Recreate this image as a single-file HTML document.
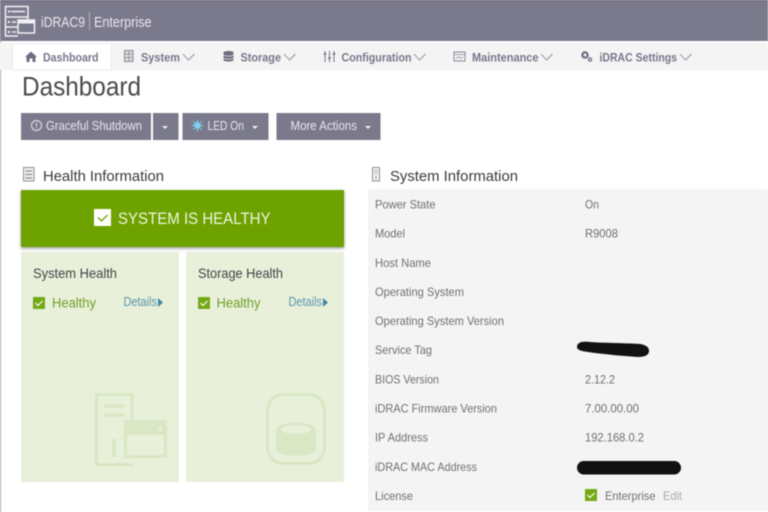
<!DOCTYPE html>
<html><head><meta charset="utf-8"><title>iDRAC9 Dashboard</title>
<style>
html,body{margin:0;padding:0;background:#fff;width:768px;height:512px;overflow:hidden}
svg{display:block;filter:blur(0.45px)}
text{font-family:"Liberation Sans",sans-serif}
.n{font-size:12px;font-weight:bold;fill:#77768a}
.b{font-size:12.5px;fill:#e6e6ec}
.l{font-size:12px;fill:#707070}
.h{font-size:15px;fill:#3a3a3a}
.c{font-size:14px;fill:#444}
.g{font-size:13.5px;fill:#6f9f28}
.d{font-size:12.5px;fill:#5a93ad}
.ch{fill:none;stroke:#8a8998;stroke-width:.9}
</style></head><body>
<svg width="768" height="512" viewBox="0 0 768 512" xmlns="http://www.w3.org/2000/svg">
<defs><filter id="s" x="-5%" y="-20%" width="110%" height="140%"><feDropShadow dx="0" dy="1.5" stdDeviation="1.5" flood-color="#000" flood-opacity=".4"/></filter></defs>
<rect width="768" height="512" fill="#fff"/>
<rect y="41" width="1" height="471" fill="#aaa"/>
<!-- header -->
<rect width="768" height="41" fill="#7b7a8c"/>
<rect width="768" height="1" fill="#5f5e70"/>
<g fill="none" stroke="#f1f1f4" stroke-width="1.500">
<path d="M28 19V6.500H5.500V36H18"/><path d="M5.500 17H28M5.500 27H18"/>
<rect x="18" y="20" width="16.500" height="13"/>
<path d="M11 11.500H25M12 22H16M12 32H16"/></g>
<rect x="18" y="19.500" width="17" height="4" fill="#f1f1f4"/>
<g fill="#f1f1f4"><rect x="8" y="10.500" width="2" height="2"/><rect x="8" y="21" width="2" height="2"/><rect x="8" y="31" width="2" height="2"/></g>
<text x="41" y="27" font-size="14.500" fill="#e8e8ee" textLength="44" lengthAdjust="spacingAndGlyphs">iDRAC9</text>
<rect x="89" y="12" width="1" height="18" fill="#b5b5c0"/>
<text x="94" y="27" font-size="14.500" fill="#e8e8ee" textLength="57.500" lengthAdjust="spacingAndGlyphs">Enterprise</text>
<!-- nav -->
<rect y="43" width="768" height="27" fill="#f4f4f4"/>
<rect x="12.500" y="43.500" width="99" height="26.500" fill="#fff" stroke="#e9e9e9"/>
<path d="M25 57L31 51.500L37 57H35.500V62H32.500V58.500H29.500V62H26.500V57Z" fill="#6f6e80"/>
<text class="n" x="43" y="61.500" textLength="55.500" lengthAdjust="spacingAndGlyphs">Dashboard</text>
<rect x="124.500" y="50.500" width="8.500" height="11" fill="#ddd" stroke="#8a8998"/><path d="M125 54H133M125 57.500H133M129 51V61" stroke="#8a8998" stroke-width=".8"/>
<text class="n" x="141" y="61.500" textLength="39" lengthAdjust="spacingAndGlyphs">System</text>
<path class="ch" d="M183 54L188.500 60L194.500 54"/>
<path d="M223.500 52.500C223.500 50.500 233.500 50.500 233.500 52.500V60C233.500 62 223.500 62 223.500 60Z" fill="#6f6e80"/><path d="M223.500 55C225 56.500 232 56.500 233.500 55M223.500 58C225 59.500 232 59.500 233.500 58" stroke="#f4f4f4" fill="none" stroke-width=".8"/>
<text class="n" x="240.500" y="61.500" textLength="40.500" lengthAdjust="spacingAndGlyphs">Storage</text>
<path class="ch" d="M284 54L289.500 60L295.500 54"/>
<path d="M325 51V62M329.500 51V62M334 51V62" stroke="#777686" stroke-width="1"/><path d="M323.500 54H326.500M328 58H331M332.500 54H335.500" stroke="#6f6e80" stroke-width="1.300"/>
<text class="n" x="341.500" y="61.500" textLength="70" lengthAdjust="spacingAndGlyphs">Configuration</text>
<path class="ch" d="M414 54L419.500 60L425.500 54"/>
<rect x="454" y="52" width="11" height="9" fill="none" stroke="#8a8998"/><path d="M454 54.500H465M456 59L458.500 56.500L460.500 58.500L463 57" fill="none" stroke="#8a8998" stroke-width=".7"/>
<text class="n" x="472" y="61.500" textLength="66.500" lengthAdjust="spacingAndGlyphs">Maintenance</text>
<path class="ch" d="M541 54L546.500 60L552.500 54"/>
<circle cx="585" cy="55" r="2.600" fill="none" stroke="#6f6e80" stroke-width="2.200"/><circle cx="590" cy="59.500" r="1.600" fill="none" stroke="#6f6e80" stroke-width="1.300"/>
<text class="n" x="599.500" y="61.500" textLength="77.500" lengthAdjust="spacingAndGlyphs">iDRAC Settings</text>
<path class="ch" d="M680 54L685.500 60L691.500 54"/>
<!-- title -->
<text x="22" y="95.500" font-size="27" fill="#4a4a4a" textLength="119" lengthAdjust="spacingAndGlyphs">Dashboard</text>
<!-- buttons -->
<g fill="#7b7a8c"><rect x="21" y="113" width="130" height="27"/><rect x="153" y="113" width="25.500" height="27"/><rect x="182.500" y="113" width="86" height="27"/><rect x="276.500" y="113" width="104" height="27"/></g>
<circle cx="36.500" cy="125.500" r="5" fill="none" stroke="#e6e6ec"/><path d="M36.500 122.500V126M36.500 127V128.500" stroke="#e6e6ec"/>
<text class="b" x="46" y="130" textLength="96" lengthAdjust="spacingAndGlyphs">Graceful Shutdown</text>
<path d="M162 126H168L165 129Z M252 126H258L255 129Z M365 126H371L368 129Z" fill="#eee"/>
<circle cx="197.500" cy="125.500" r="3.200" fill="#7fd0f2"/><path d="M197.500 119.500V131.500M191.500 125.500H203.500M193.300 121.300L201.700 129.700M193.300 129.700L201.700 121.300" stroke="#7fd0f2" stroke-width="1"/>
<text class="b" x="207.500" y="130" textLength="36.500" lengthAdjust="spacingAndGlyphs">LED On</text>
<text class="b" x="290.500" y="130" textLength="66.500" lengthAdjust="spacingAndGlyphs">More Actions</text>
<!-- health -->
<rect x="23.500" y="167.500" width="10.500" height="13.500" fill="#eee" stroke="#8f8f8f"/><path d="M25.500 171H32M25.500 174.500H32M25.500 178H32" stroke="#8f8f8f" stroke-width="1.200"/>
<text class="h" x="43" y="181" textLength="121" lengthAdjust="spacingAndGlyphs">Health Information</text>
<rect x="21" y="190" width="323" height="57" fill="#6ea204" filter="url(#s)"/>
<rect x="94" y="209" width="17" height="17" fill="#fff"/>
<path d="M98 217.500L101.500 221L107.500 215" fill="none" stroke="#6ea204" stroke-width="1.300"/>
<text x="118" y="224" font-size="17" fill="#eef5e0" textLength="152.500" lengthAdjust="spacingAndGlyphs">SYSTEM IS HEALTHY</text>
<rect x="21" y="252" width="158" height="230" fill="#e8f0da"/>
<rect x="186" y="252" width="158" height="230" fill="#e8f0da"/>
<text class="c" x="33" y="278" textLength="84" lengthAdjust="spacingAndGlyphs">System Health</text>
<text class="c" x="198" y="278" textLength="85" lengthAdjust="spacingAndGlyphs">Storage Health</text>
<g><rect x="33" y="297" width="12" height="12" fill="#75a816"/><path d="M35.500 303L38 305.500L42.500 301" fill="none" stroke="#fff" stroke-width="1.200"/>
<rect x="198" y="297" width="12" height="12" fill="#75a816"/><path d="M200.500 303L203 305.500L207.500 301" fill="none" stroke="#fff" stroke-width="1.200"/></g>
<text class="g" x="52" y="307.500" textLength="44" lengthAdjust="spacingAndGlyphs">Healthy</text>
<text class="g" x="216.500" y="307.500" textLength="44" lengthAdjust="spacingAndGlyphs">Healthy</text>
<text class="d" x="123.500" y="306" textLength="33.500" lengthAdjust="spacingAndGlyphs">Details</text>
<text class="d" x="288.500" y="306" textLength="33.500" lengthAdjust="spacingAndGlyphs">Details</text>
<path d="M158 298L163 302.500L158 307Z M323 298L328 302.500L323 307Z" fill="#3f87a8"/>
<!-- watermark icons -->
<g fill="none" stroke="#d9e7c4" stroke-width="3">
<path d="M132 420V394.500H96.500V464.500H134"/>
<path d="M104 406H124M104 415H124" stroke-width="3.500"/><path d="M114 439V457" stroke-width="4"/>
<rect x="125.500" y="421.500" width="40" height="35"/>
<rect x="267.500" y="394.500" width="57" height="69" rx="16"/>
</g>
<rect x="124" y="420" width="43" height="15" fill="#d9e7c4"/><circle cx="160" cy="429" r="2" fill="#e8f0da"/>
<path d="M276 431C276 420 316 420 316 431V449C316 458 276 458 276 449Z" fill="#d9e7c4"/>
<ellipse cx="296" cy="429.500" rx="15" ry="4.500" fill="#e8f0da"/>
<!-- system info -->
<rect x="372.500" y="167.500" width="7" height="13.500" fill="#f2f2f2" stroke="#8f8f8f"/><path d="M374 170.500H378M374 173H378M376 175.500V179.500" stroke="#8f8f8f" stroke-width=".8"/>
<text class="h" x="390" y="181" textLength="128" lengthAdjust="spacingAndGlyphs">System Information</text>
<rect x="368" y="189" width="400" height="322" fill="#f4f4f4"/>
<text class="l" x="375" y="208.500" textLength="60.500" lengthAdjust="spacingAndGlyphs">Power State</text>
<text class="l" x="375" y="237.500" textLength="30" lengthAdjust="spacingAndGlyphs">Model</text>
<text class="l" x="375" y="267" textLength="56" lengthAdjust="spacingAndGlyphs">Host Name</text>
<text class="l" x="375" y="296" textLength="89" lengthAdjust="spacingAndGlyphs">Operating System</text>
<text class="l" x="375" y="325" textLength="129" lengthAdjust="spacingAndGlyphs">Operating System Version</text>
<text class="l" x="375" y="354" textLength="57" lengthAdjust="spacingAndGlyphs">Service Tag</text>
<text class="l" x="375" y="383.500" textLength="64" lengthAdjust="spacingAndGlyphs">BIOS Version</text>
<text class="l" x="375" y="412.500" textLength="122" lengthAdjust="spacingAndGlyphs">iDRAC Firmware Version</text>
<text class="l" x="375" y="441.500" textLength="53" lengthAdjust="spacingAndGlyphs">IP Address</text>
<text class="l" x="375" y="471" textLength="102" lengthAdjust="spacingAndGlyphs">iDRAC MAC Address</text>
<text class="l" x="375" y="500" textLength="38" lengthAdjust="spacingAndGlyphs">License</text>
<text class="l" x="585" y="208.500" textLength="14" lengthAdjust="spacingAndGlyphs">On</text>
<text class="l" x="585" y="237.500" textLength="33" lengthAdjust="spacingAndGlyphs">R9008</text>
<text class="l" x="585" y="383.500" textLength="30" lengthAdjust="spacingAndGlyphs">2.12.2</text>
<text class="l" x="585" y="412.500" textLength="54" lengthAdjust="spacingAndGlyphs">7.00.00.00</text>
<text class="l" x="585" y="441.500" textLength="59" lengthAdjust="spacingAndGlyphs">192.168.0.2</text>
<rect x="585" y="489" width="12" height="12" fill="#75a816"/><path d="M587.500 495L590 497.500L594.500 493" fill="none" stroke="#fff" stroke-width="1.200"/>
<text class="l" x="605" y="500" textLength="50.500" lengthAdjust="spacingAndGlyphs">Enterprise</text>
<text x="663" y="500" font-size="12" fill="#aaa" textLength="19" lengthAdjust="spacingAndGlyphs">Edit</text>
<!-- redactions -->
<path d="M577 347C577 342 583 341 590 342C605 343 625 343 640 344C646 345 649 347 649 351C649 355 645 357 638 357C622 356 602 354 588 352C581 351 577 350 577 347Z" fill="#111"/>
<rect x="577" y="461" width="104" height="13.500" rx="6.700" fill="#111"/>
</svg>
</body></html>
